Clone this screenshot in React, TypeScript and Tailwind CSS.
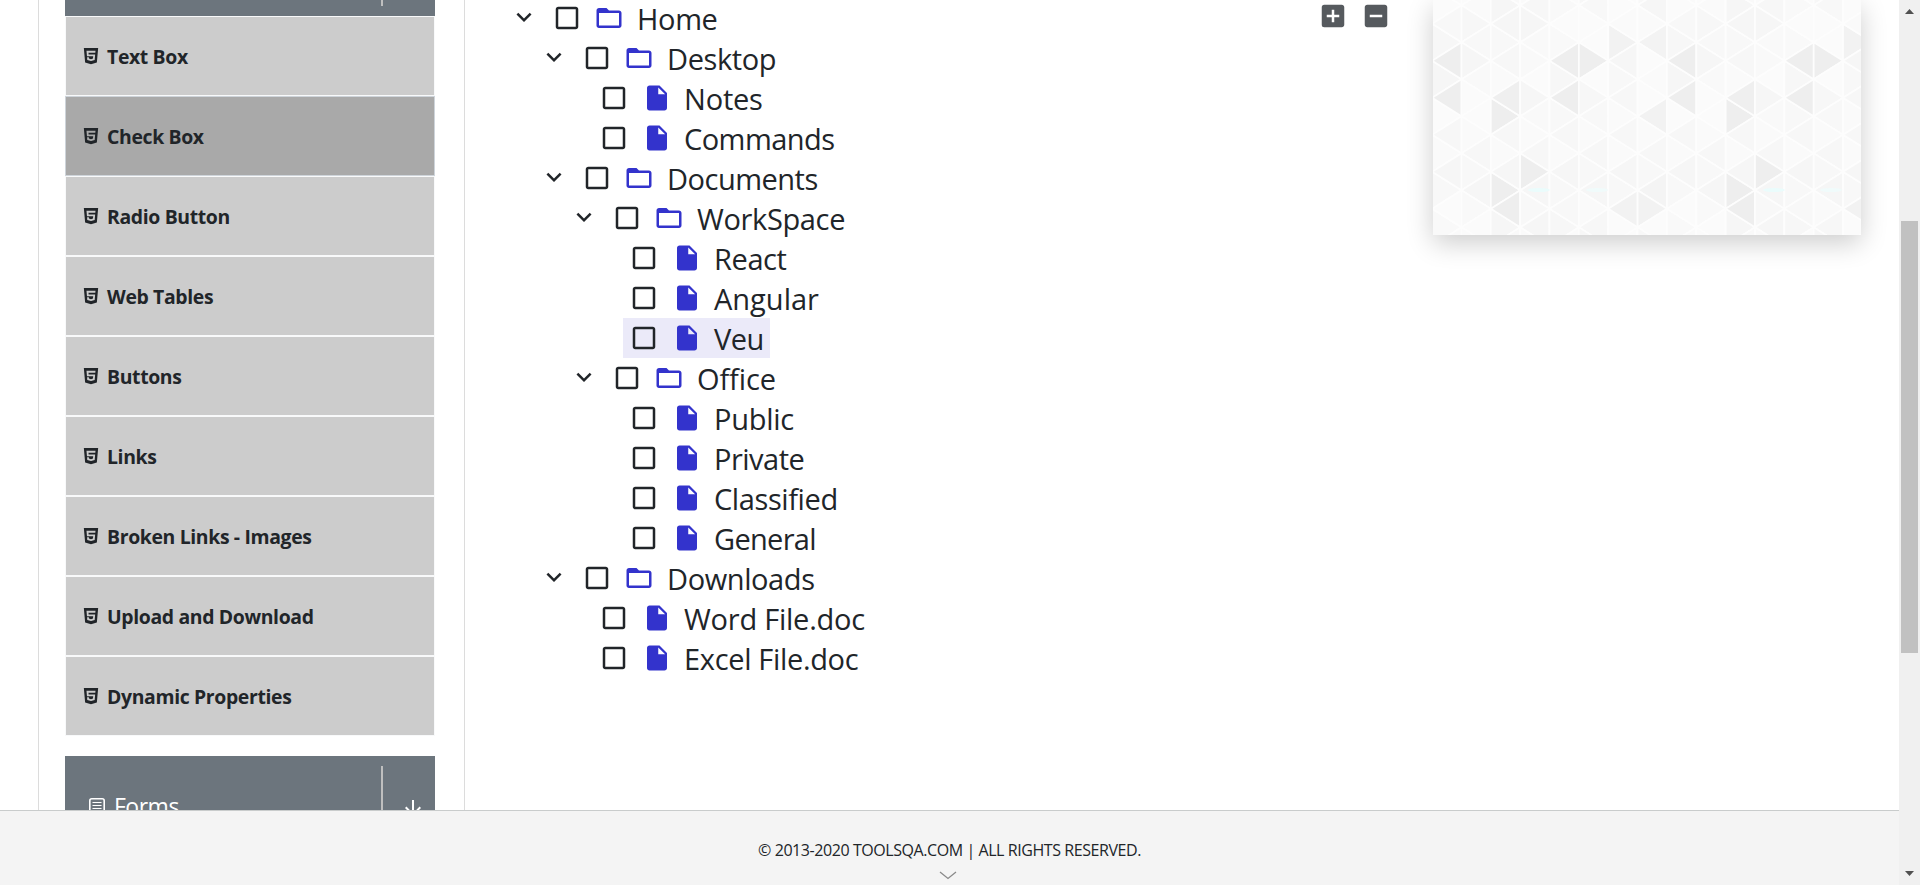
import React from "react";
import { AiFillHtml5 } from "react-icons/ai";
import {
  MdAddBox,
  MdArrowDownward,
  MdCheckBoxOutlineBlank,
  MdIndeterminateCheckBox,
  MdInsertDriveFile,
  MdKeyboardArrowDown,
} from "react-icons/md";

const menuItems = [
  "Text Box",
  "Check Box",
  "Radio Button",
  "Web Tables",
  "Buttons",
  "Links",
  "Broken Links - Images",
  "Upload and Download",
  "Dynamic Properties",
];

type TreeNode = { label: string; indent: string; tracking: string; folder?: boolean; hovered?: boolean };

const nodes: TreeNode[] = [
  { label: "Home", indent: "pl-0", tracking: "tracking-[-0.35px]", folder: true },
  { label: "Desktop", indent: "pl-[30px]", tracking: "tracking-[-0.4px]", folder: true },
  { label: "Notes", indent: "pl-[84px]", tracking: "tracking-[-0.2px]" },
  { label: "Commands", indent: "pl-[84px]", tracking: "tracking-[-0.55px]" },
  { label: "Documents", indent: "pl-[30px]", tracking: "tracking-[-0.5px]", folder: true },
  { label: "WorkSpace", indent: "pl-[60px]", tracking: "tracking-[-0.35px]", folder: true },
  { label: "React", indent: "pl-[114px]", tracking: "tracking-[-0.4px]" },
  { label: "Angular", indent: "pl-[114px]", tracking: "tracking-normal" },
  { label: "Veu", indent: "pl-[114px]", tracking: "tracking-[-0.5px]", hovered: true },
  { label: "Office", indent: "pl-[60px]", tracking: "tracking-[-0.1px]", folder: true },
  { label: "Public", indent: "pl-[114px]", tracking: "tracking-[-0.25px]" },
  { label: "Private", indent: "pl-[114px]", tracking: "tracking-[-0.5px]" },
  { label: "Classified", indent: "pl-[114px]", tracking: "tracking-[-0.4px]" },
  { label: "General", indent: "pl-[114px]", tracking: "tracking-[-0.7px]" },
  { label: "Downloads", indent: "pl-[30px]", tracking: "tracking-[-0.4px]", folder: true },
  { label: "Word File.doc", indent: "pl-[84px]", tracking: "tracking-[-0.23px]" },
  { label: "Excel File.doc", indent: "pl-[84px]", tracking: "tracking-[-0.33px]" },
];

function FolderIcon() {
  return (
    <svg viewBox="0 0 24 24" className="size-[30px] fill-[#3333cc]">
      <path d="M20 6h-8l-2-2H4c-1.1 0-1.99.9-1.99 2L2 18c0 1.1.9 2 2 2h16c1.1 0 2-.9 2-2V8c0-1.1-.9-2-2-2zm0 12H4V8h16v10z" />
    </svg>
  );
}

function FormIcon() {
  return (
    <svg viewBox="0 0 18 20" className="h-5 w-[18px] fill-none stroke-white">
      <rect x="1.8" y="1.8" width="14.4" height="16.4" rx="2" strokeWidth="1.6" />
      <path d="M4.5 5.5h9M4.5 8.5h9M4.5 11.5h9M4.5 14.5h5" strokeWidth="1.1" />
    </svg>
  );
}

function Row({ node }: { node: TreeNode }) {
  return (
    <li className={`flex h-10 ${node.indent}`}>
      {node.folder && <MdKeyboardArrowDown className="mt-1 mr-[7px] size-[30px] shrink-0" />}
      <span className={`flex h-10 pr-[6px] pl-[6px] ${node.hovered ? "w-[147px] bg-[#ebeaf9]" : ""}`}>
        <MdCheckBoxOutlineBlank className="mt-[5px] size-[30px] shrink-0" />
        <span className={`mt-[5px] shrink-0 ${node.folder ? "ml-3" : "ml-[13px]"}`}>
          {node.folder ? <FolderIcon /> : <MdInsertDriveFile className="size-[30px] text-[#3333cc]" />}
        </span>
        <span
          className={`text-[29px] leading-[42px] whitespace-nowrap ${node.folder ? "ml-[13px]" : "ml-3"} ${node.tracking}`}
        >
          {node.label}
        </span>
      </span>
    </li>
  );
}

const COL = 29.35;
const SIDE = 37;
const PERIOD = 8;
const darkTriangles: Record<string, string> = {
  "7L60": "#eeeeee",
  "7L97": "#eeeeee",
  "1L97": "#efefef",
  "1R116": "#eeeeee",
  "3L60": "#eeeeee",
  "4R60": "#eeeeee",
  "3L97": "#eeeeee",
  "5R42": "#f2f2f2",
  "6L42": "#f3f3f3",
  "6L116": "#f2f2f2",
  "2R171": "#eeeeee",
  "1R190": "#eeeeee",
  "1L208": "#eeeeee",
  "5L208": "#f2f2f2",
  "6R208": "#f2f2f2",
  "6L190": "#f4f4f4",
};
const lightShades = ["#fbfbfb", "#f7f7f7", "#f9f9f9", "#fafafa", "#f6f6f6", "#fbfbfb", "#f8f8f8"];

function TrianglePattern() {
  const triangles: React.ReactElement[] = [];
  const start = (line: number) => (Math.abs(line) % 2 === 0 ? 5.3 : 23.8);
  for (let s = -1; s < 15; s++) {
    const left = 28.5 + s * COL;
    const right = left + COL;
    const cell = (s + PERIOD) % PERIOD;
    for (let n = -2; n < 7; n++) {
      const yl = start(s) + n * SIDE;
      const yr = start(s + 1) + n * SIDE;
      const shapes: [string, number, string][] = [
        ["R", yl, `${left},${yl} ${left},${yl + SIDE} ${right},${yl + SIDE / 2}`],
        ["L", yr, `${right},${yr} ${right},${yr + SIDE} ${left},${yr + SIDE / 2}`],
      ];
      shapes.forEach(([dir, y, points]) => {
        const middle = y + SIDE / 2;
        const key = Object.keys(darkTriangles).find(
          (k) => k.startsWith(`${cell}${dir}`) && Math.abs(Number(k.slice(2)) - middle) < 5,
        );
        const shade = lightShades[(cell * 5 + (n + 2) * 3 + (dir === "R" ? 2 : 0) + cell * n * n + 14) % 7];
        triangles.push(
          <polygon key={`${s}${dir}${n}`} points={points} fill={key ? darkTriangles[key] : shade} stroke="#fdfdfd" strokeWidth="1.7" />,
        );
      });
    }
  }
  return (
    <svg viewBox="0 0 428 235" className="block h-[235px] w-[428px] bg-[#fafafa]">
      {triangles}
      {[106, 164, 341, 398].map((x, i) => (
        <ellipse key={x} cx={x} cy="190" rx="11" ry="2" fill={i % 2 ? "#f0fbfb" : "#eafcfc"} />
      ))}
    </svg>
  );
}

export default function App() {
  return (
    <div className="flex h-[885px] w-[1920px] overflow-hidden bg-white font-['Open_Sans','Noto_Sans',sans-serif] text-[#212529]">
      <div className="flex w-[1899px] flex-col">
        <div className="flex h-[810px] overflow-hidden">
          <aside className="ml-[38px] w-[427px] shrink-0 border-x border-[#dcdcdc] px-[26px]">
            <div className="flex h-4 w-[370px] justify-end bg-[#6c757d] pr-[52px]">
              <span className="h-[6px] w-[2px] bg-[#bfbfbf]" />
            </div>
            <ul className="w-[370px]">
              {menuItems.map((item) => (
                <li
                  key={item}
                  className={`flex h-20 items-center border pl-[15px] text-[19.4px] font-bold tracking-[-0.35px] ${
                    item === "Check Box" ? "border-[#ced4da] bg-[#a9a9a9]" : "border-[#f8f9fa] bg-[#cccccc]"
                  }`}
                >
                  <AiFillHtml5 className="mr-[6px] mb-px size-5 shrink-0" />
                  <span className="pt-[2px] whitespace-nowrap">{item}</span>
                </li>
              ))}
            </ul>
            <div className="mt-5 flex h-[100px] w-[370px] bg-[#6c757d] pl-[23px] text-white">
              <div className="flex h-full w-[293px] shrink-0 items-start pt-[41px]">
                <FormIcon />
                <span className="ml-2 -mt-[8px] text-[23px] leading-[34px] tracking-[-0.5px]">Forms</span>
              </div>
              <div className="mt-[10px] h-20 w-[2px] shrink-0 bg-[#bfbfbf]" />
              <MdArrowDownward className="mt-10 ml-[18px] size-6 shrink-0" />
            </div>
          </aside>
          <main className="flex flex-1">
            <ul className="-mt-[2px] ml-[44px] w-[809px] shrink-0">
              {nodes.map((node) => (
                <Row key={node.label} node={node} />
              ))}
            </ul>
            <div className="mt-[1px] flex w-[115px] shrink-0 items-start gap-[13px] text-[#565a5e]">
              <MdAddBox className="size-[30px]" />
              <MdIndeterminateCheckBox className="size-[30px]" />
            </div>
            <div className="h-[235px] w-[428px] shrink-0 shadow-[0_8px_25px_rgba(0,0,0,0.2)]">
              <TrianglePattern />
            </div>
          </main>
        </div>
        <footer className="flex h-[75px] flex-col items-center border-t border-[#c9cccc] bg-[#f4f4f4]">
          <span className="mt-[27px] text-base leading-6 tracking-[-0.43px] whitespace-nowrap">
            © 2013-2020 TOOLSQA.COM | ALL RIGHTS RESERVED.
          </span>
          <svg viewBox="0 0 18 9" className="mt-[9px] mr-[4px] h-[9px] w-[18px] fill-none stroke-[#8a8a8a]">
            <path d="M1 1l8 6.5L17 1" strokeWidth="1.3" />
          </svg>
        </footer>
      </div>
      <div className="flex w-[21px] flex-col items-center bg-[#f0f0f0] pt-[9px]">
        <svg viewBox="0 0 9 5" className="h-[5px] w-[9px] fill-[#505050]">
          <path d="M0 5l4.5-5L9 5z" />
        </svg>
        <div className="mt-[207px] h-[432px] w-[17px] bg-[#c1c1c1]" />
        <svg viewBox="0 0 9 5" className="mt-[218px] h-[5px] w-[9px] fill-[#505050]">
          <path d="M0 0l4.5 5L9 0z" />
        </svg>
      </div>
    </div>
  );
}
